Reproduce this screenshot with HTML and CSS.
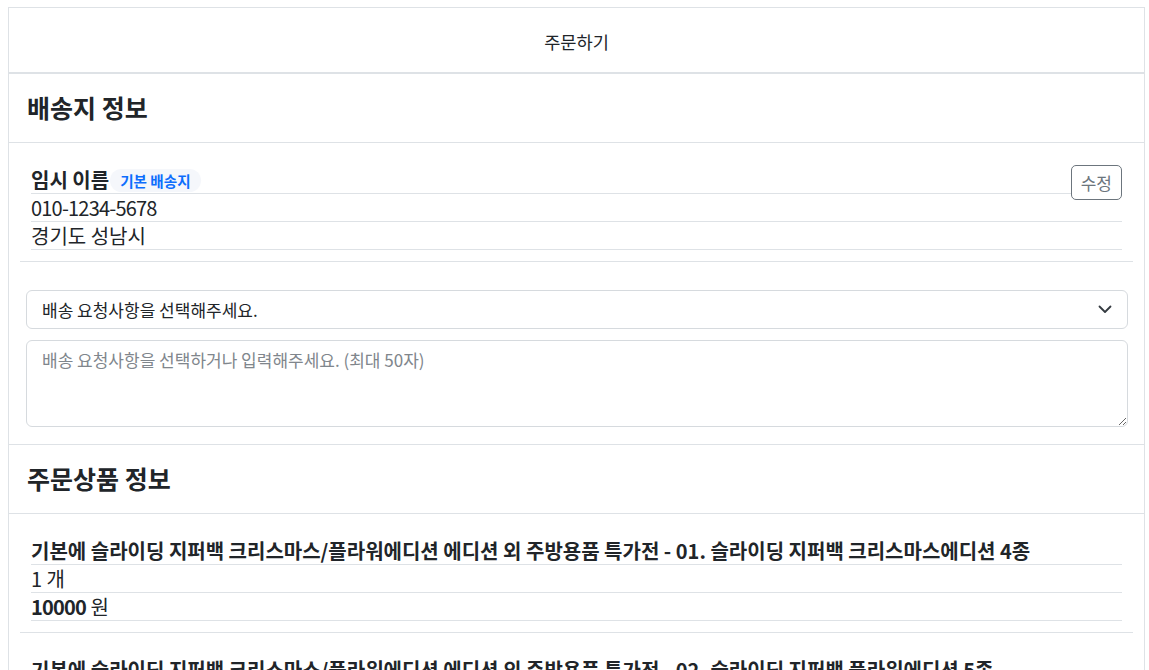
FILE: index.html
```html
<html>
<head>
    <title>주문하기</title>
    <link rel="stylesheet" href="styles.css">
</head>
<body>
    <div class="page">
        <!-- Top bar -->
        <div class="topbar">주문하기</div>

        <!-- Delivery info -->
        <div class="section-head">
            <h2>배송지 정보</h2>
        </div>
        <div class="block">
            <div class="row"><span class="name">임시 이름</span><span class="badge">기본 배송지</span></div>
            <div class="row"><span class="num">010-1234-5678</span></div>
            <div class="row">경기도 성남시</div>
            <button class="edit-btn">수정</button>
        </div>
        <div class="request">
            <div class="select-wrap">
                <select class="select">
                    <option>배송 요청사항을 선택해주세요.</option>
                </select>
                <svg class="caret" width="14" height="9" viewBox="0 0 14 9">
                    <path d="M1.5 1.5 L7 7 L12.5 1.5" fill="none" stroke="#343a40" stroke-width="1.8" stroke-linecap="round" stroke-linejoin="round"/>
                </svg>
            </div>
            <textarea class="memo" placeholder="배송 요청사항을 선택하거나 입력해주세요. (최대 50자)"></textarea>
        </div>

        <!-- Order items -->
        <div class="section-head">
            <h2>주문상품 정보</h2>
        </div>
        <div class="block">
            <div class="row"><b>기본에 슬라이딩 지퍼백 크리스마스/플라워에디션 에디션 외 주방용품 특가전 - 01. 슬라이딩 지퍼백 크리스마스에디션 4종</b></div>
            <div class="row">1 개</div>
            <div class="row"><b class="num">10000</b> 원</div>
        </div>
        <div class="block">
            <div class="row"><b>기본에 슬라이딩 지퍼백 크리스마스/플라워에디션 에디션 외 주방용품 특가전 - 02. 슬라이딩 지퍼백 플라워에디션 5종</b></div>
            <div class="row">1 개</div>
            <div class="row"><b class="num">10000</b> 원</div>
        </div>
    </div>
</body>
</html>
```

FILE: styles.css
```css
body {
    margin: 0;
    font-family: "Noto Sans CJK KR", "Noto Sans", sans-serif;
    font-size: 16px;
    color: #212529;
    background: #fff;
}

.page {
    width: 1137px;
    margin: 7px 0 0 8px;
    border: 1px solid #dee2e6;
    border-bottom: none;
    box-sizing: border-box;
}

.topbar {
    padding: 22px 0 18px;
    font-size: 17.6px;
    line-height: 24px;
    text-align: center;
    border-bottom: 2px solid #dee2e6;
}

.section-head {
    padding: 19px 18px 20px;
    border-bottom: 1px solid #dee2e6;
}

.section-head h2 {
    margin: 0;
    font-size: 25px;
    line-height: 29px;
    font-weight: 700;
}

.block {
    position: relative;
    margin: 0 11px;
    padding: 23px 11px 11px;
    border-bottom: 1px solid #dee2e6;
}

.row {
    height: 27px;
    line-height: 27px;
    font-size: 20px;
    border-bottom: 1px solid #dee2e6;
    white-space: nowrap;
    overflow: hidden;
}

.num {
    letter-spacing: -0.8px;
}

.name {
    font-weight: 700;
}

.badge {
    display: inline-block;
    margin-left: 1px;
    padding: 4px 10px;
    line-height: 15px;
    font-size: 14.6px;
    font-weight: 700;
    vertical-align: 1px;
    color: #0d6efd;
    background-color: #f5f7fb;
    border-radius: 12px;
}

.edit-btn {
    position: absolute;
    top: 22px;
    right: 11px;
    padding: 4px 9px;
    font-family: inherit;
    font-size: 17px;
    line-height: 25px;
    color: #6c757d;
    background: #fff;
    border: 1px solid #6c757d;
    border-radius: 5px;
}

.request {
    padding: 28px 16px 17px 17px;
    border-bottom: 1px solid #dee2e6;
}

.select-wrap {
    position: relative;
    margin-bottom: 11px;
}

.select {
    display: block;
    width: 100%;
    height: 39px;
    padding: 0 40px 0 15px;
    font-family: inherit;
    font-size: 17px;
    color: #212529;
    background: #fff;
    border: 1px solid #d6dade;
    border-radius: 6px;
    appearance: none;
    -webkit-appearance: none;
}

.caret {
    position: absolute;
    top: 15px;
    right: 16px;
}

.memo {
    display: block;
    width: 100%;
    height: 87px;
    box-sizing: border-box;
    padding: 6px 15px;
    font-family: inherit;
    font-size: 17px;
    line-height: 26px;
    border: 1px solid #d6dade;
    border-radius: 6px;
}

.memo::placeholder {
    color: #80868c;
}
```
